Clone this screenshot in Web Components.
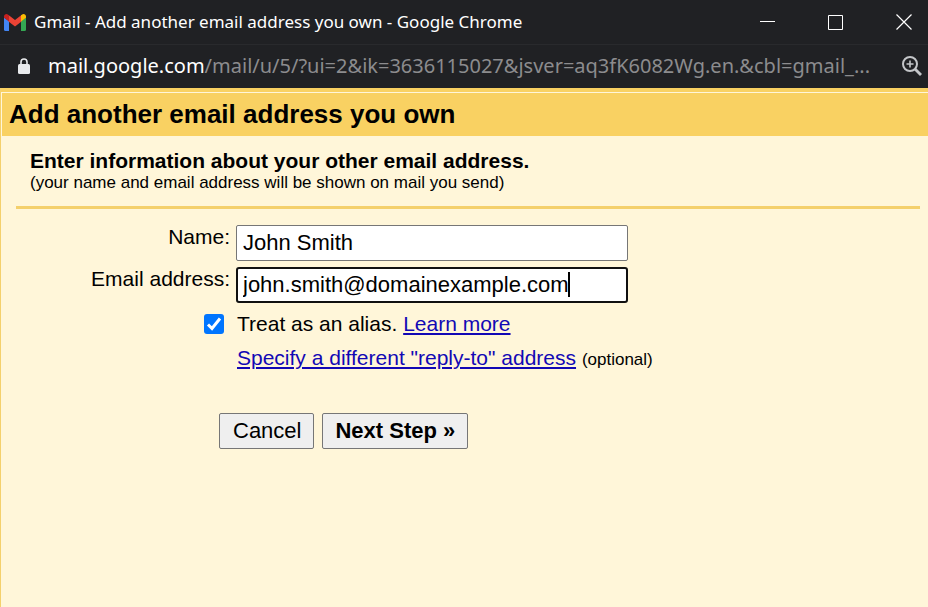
<!DOCTYPE html>
<html lang="en">
<head>
<meta charset="utf-8">
<meta name="viewport" content="width=device-width">
<title>Gmail - Add another email address you own</title>
<style>
html, body { height: 100%; }
body { margin: 0; background: #fff6d9; font-family: "Liberation Sans", Arial, sans-serif; }
</style>
</head>
<body>
<popup-window></popup-window>
<script>
const define = (name, html, setup) => {
  const template = document.createElement("template");
  template.innerHTML = html;
  customElements.define(name, class extends HTMLElement {
    constructor() {
      super();
      this.attachShadow({ mode: "open" }).append(template.content.cloneNode(true));
    }
    connectedCallback() { if (setup) setup(this, this.shadowRoot); }
  });
};

define("title-bar", `
<style>
:host { display: flex; align-items: center; height: 44px; background: #202124; color: #fff; border-bottom: 1px solid #292a2d; font: 17px/24px "Noto Sans", sans-serif; box-sizing: content-box; }
.logo { flex: none; width: 22px; height: 17px; margin: 0 8px 0 4px; }
.title { flex: 1; min-width: 0; overflow: hidden; white-space: nowrap; text-overflow: ellipsis; }
button { flex: none; width: 68px; height: 44px; padding: 0; border: 0; background: none; color: inherit; display: grid; place-items: center; }
.close { width: 48px; margin-left: 10px; }
button svg { width: 16px; height: 16px; display: block; }
</style>
<svg class="logo" viewBox="0 0 22 17" aria-hidden="true">
  <path fill="#4285f4" d="M0 3.400 5 7v10H1.500A1.500 1.500 0 0 1 0 15.500z"/>
  <path fill="#34a853" d="M17 7l5-3.600v12.100a1.500 1.500 0 0 1-1.500 1.500H17z"/>
  <path fill="#ea4335" d="M4.500 1 11 6l6.500-5V7.500L11 12.500 4.500 7.500z"/>
  <path fill="#c5221f" d="M0 2.500C0 .3 2.500-.6 4.200.7L5 1.300v6.200L0 3.800z"/>
  <path fill="#fbbc04" d="M22 2.500C22 .3 19.500-.6 17.800.7l-.8.6v6.200l5-3.700z"/>
</svg>
<div class="title"><slot></slot></div>
<button aria-label="Minimize"><svg viewBox="0 0 16 16"><path d="M0 7.500h15" stroke="#fff"/></svg></button>
<button aria-label="Maximize"><svg viewBox="0 0 16 16"><path d="M.5 1.500h14v14H.5z" fill="none" stroke="#fff"/></svg></button>
<button class="close" aria-label="Close"><svg viewBox="0 0 16 16"><path d="M.5.5l15 15M15.500.5l-15 15" stroke="#fff" stroke-width="1.200"/></svg></button>
`);

define("address-bar", `
<style>
:host { display: flex; align-items: center; height: 43px; background: #202124; color: #8c8c8e; font: 20px/28px "Noto Sans", sans-serif; }
.lock { flex: none; width: 12px; height: 16px; margin: 0 18px; }
.url { flex: 1; min-width: 0; white-space: nowrap; overflow: hidden; padding-bottom: 2px; }
.host { color: #fff; }
button { flex: none; padding: 0 0 2px; border: 0; background: none; margin-right: 6px; }
button svg { display: block; width: 20px; height: 20px; }
.lock { padding-bottom: 2px; }
</style>
<svg class="lock" viewBox="0 0 12 16" aria-hidden="true"><path d="M3 7V4a3 3 0 0 1 6 0v3" fill="none" stroke="#e8eaed" stroke-width="1.600"/><rect y="6" width="12" height="10" rx="1.500" fill="#e8eaed"/></svg>
<div class="url"><span class="host"><slot name="host"></slot></span><slot></slot></div>
<button aria-label="Zoom"><svg viewBox="0 0 20 20" fill="none" stroke="#c4c6c9"><circle cx="8" cy="8" r="7" stroke-width="2"/><path d="M8 4.500v7M4.500 8h7" stroke-width="1.600"/><path d="M13 13l6 6" stroke-width="2.800"/></svg></button>
`);

define("page-heading", `
<style>
:host { display: block; border-top: 4px solid #f9d162; }
h1 { margin: 0; padding: 0 7px; border-top: 1px solid #fff6d9; border-left: 1px solid #fff6d9; background: #f9d162; font-size: 26px; line-height: 43px; font-weight: bold; }
</style>
<h1><slot></slot></h1>
`);

define("section-intro", `
<style>
:host { display: block; margin: 0 8px 0 15px; padding: 14px 14px 13px; border-bottom: 3px solid #f4d06c; }
h2 { margin: 0; font-size: 21px; line-height: 22px; }
p { margin: 0; padding-top: 1px; font-size: 17px; line-height: 20px; }
</style>
<h2><slot name="title"></slot></h2>
<p><slot></slot></p>
`);

define("text-field", `
<style>
:host { display: grid; grid-template-columns: 229px minmax(0, 392px); column-gap: 6px; font-size: 21px; }
label { text-align: right; line-height: 24px; }
.box { position: relative; display: grid; }
input { box-sizing: border-box; width: 100%; height: 36px; margin: 0; padding: 0 6px; border: 1px solid #767676; border-radius: 2px; background: #fff; color: #000; font: 22px/26px "Liberation Sans", Arial, sans-serif; outline: 0; }
:host([active]) input { border: 2px solid #101010; border-radius: 3px; padding: 0 5px; }
.caret { display: none; position: absolute; left: 332px; top: 5px; width: 2px; height: 25px; background: #000; }
:host([active]) .caret { display: block; }
</style>
<label for="field"></label>
<div class="box"><input id="field" type="text"><span class="caret"></span></div>
`, (el, root) => {
  root.querySelector("label").textContent = el.getAttribute("label");
  root.querySelector("input").value = el.getAttribute("value");
});

define("alias-options", `
<style>
:host { display: grid; grid-template-columns: 229px minmax(0, 1fr); column-gap: 7px; row-gap: 10px; font-size: 21px; line-height: 24px; }
.tick { display: flex; justify-content: flex-end; align-items: center; padding-right: 6px; }
input { appearance: none; width: 20px; height: 20px; margin: 0; border-radius: 3px; background: #0075ff; }
input:checked { background-image: url("data:image/svg+xml,%3Csvg xmlns='http://www.w3.org/2000/svg' viewBox='0 0 20 20'%3E%3Cpath d='M4 10.500l4 4 8-10' fill='none' stroke='white' stroke-width='3'/%3E%3C/svg%3E"); }
a { color: #1208b5; text-decoration-thickness: 2px; text-underline-offset: 2px; }
.second { grid-column: 2; }
small { font-size: 17px; }
</style>
<div class="tick"><input id="alias" type="checkbox" checked></div>
<div><label for="alias">Treat as an alias.</label> <a href="#learn">Learn more</a></div>
<div class="second"><a href="#reply">Specify a different "reply-to" address</a> <small>(optional)</small></div>
`);

define("action-button", `
<style>
:host { display: block; }
button { box-sizing: border-box; height: 36px; margin: 0; padding: 0 12px 0 13px; border: 1px solid #767676; border-radius: 2px; background: #efefef; color: #000; font: 22px/26px "Liberation Sans", Arial, sans-serif; }
:host([primary]) button { padding: 0 12px; font-weight: bold; }
</style>
<button type="button"><slot></slot></button>
`);

define("popup-window", `
<style>
:host { display: flex; flex-direction: column; min-height: 100vh; color: #000; }
main { flex: 1; border-left: 1px solid #f4d06c; background: #fff6d9; }
form { margin: 0; padding-top: 16px; display: flex; flex-direction: column; gap: 6px; }
alias-options { margin-top: 3px; }
.actions { display: flex; gap: 8px; padding: 35px 0 0 218px; }
</style>
<title-bar>Gmail - Add another email address you own - Google Chrome</title-bar>
<address-bar><span slot="host">mail.google.com</span>/mail/u/5/?ui=2&amp;ik=3636115027&amp;jsver=aq3fK6082Wg.en.&amp;cbl=gmail_...</address-bar>
<main>
  <page-heading>Add another email address you own</page-heading>
  <section-intro><span slot="title">Enter information about your other email address.</span>(your name and email address will be shown on mail you send)</section-intro>
  <form>
    <text-field label="Name:" value="John Smith"></text-field>
    <text-field label="Email address:" value="john.smith@domainexample.com" active></text-field>
    <alias-options></alias-options>
    <div class="actions"><action-button>Cancel</action-button><action-button primary>Next Step »</action-button></div>
  </form>
</main>
`);
</script>
</body>
</html>
